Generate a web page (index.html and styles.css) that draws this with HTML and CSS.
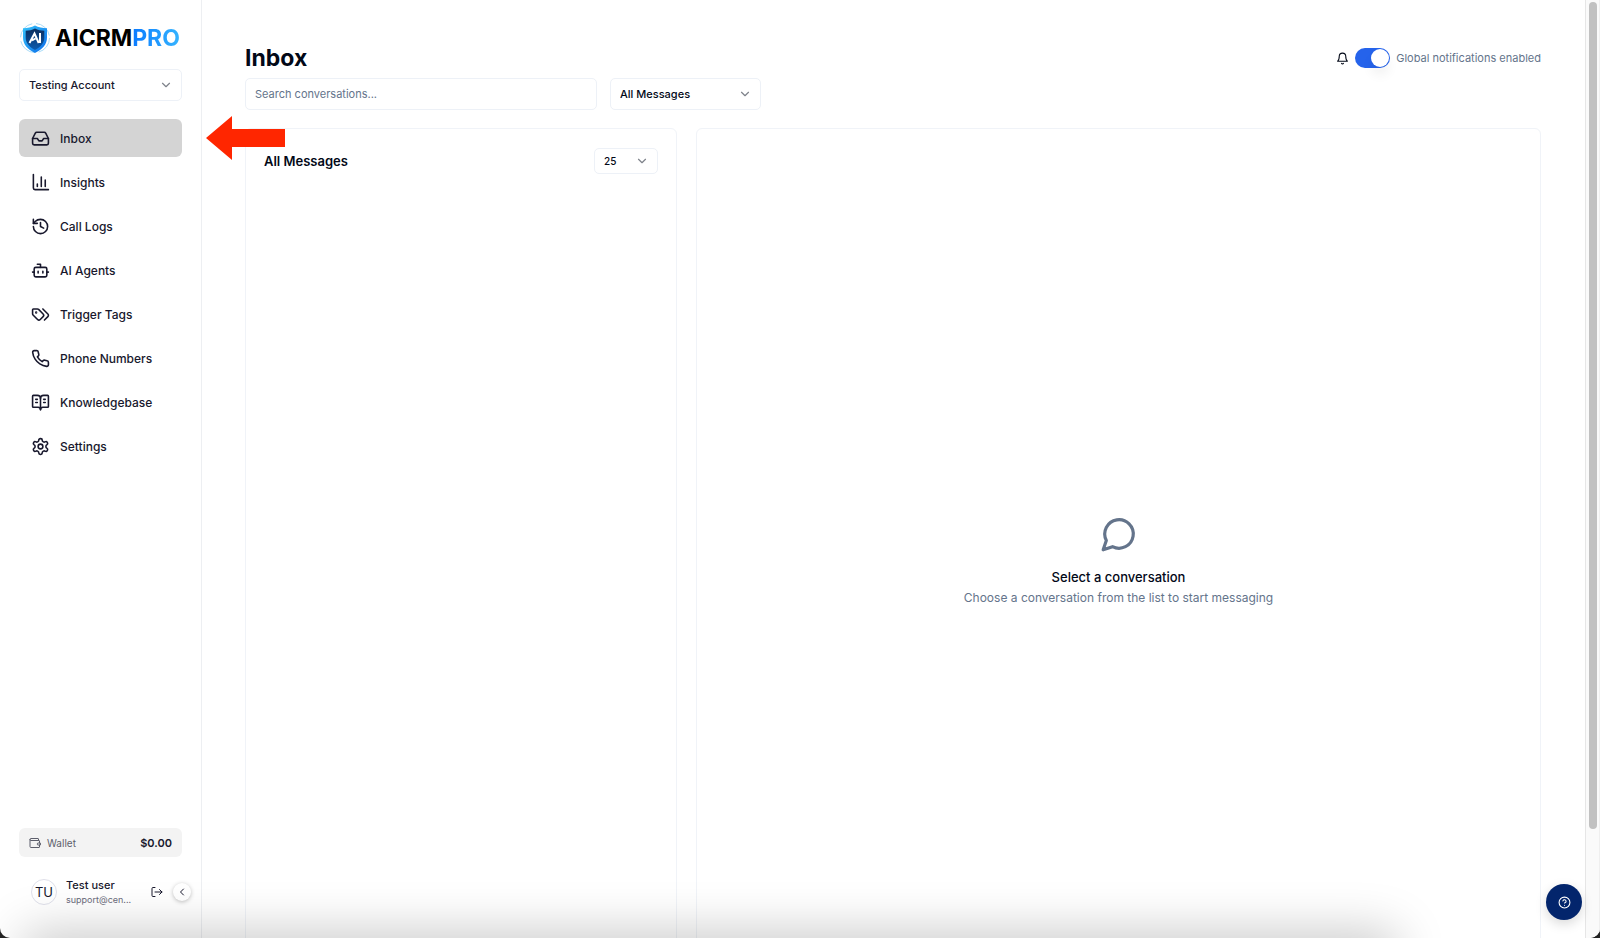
FILE: index.html
```html
<!DOCTYPE html>
<html lang="en">
<head>
  <meta charset="UTF-8">
  <meta name="viewport" content="width=device-width, initial-scale=1">
  <title>Inbox - AICRMPRO</title>
  <link rel="stylesheet" href="styles.css">
</head>
<body>

  <div class="app">

    <!-- Sidebar -->
    <aside class="sidebar">
      <a class="logo" href="#">
        <svg class="logo-mark" viewBox="0 0 32 32" aria-hidden="true">
          <defs>
            <linearGradient id="shieldEdge" x1="0" y1="0" x2="1" y2="1">
              <stop offset="0" stop-color="#35c3fb"/>
              <stop offset="1" stop-color="#0a6be8"/>
            </linearGradient>
            <linearGradient id="shieldFill" x1="0" y1="0" x2="0" y2="1">
              <stop offset="0" stop-color="#0b2c5c"/>
              <stop offset="1" stop-color="#0a5bb0"/>
            </linearGradient>
          </defs>
          <circle cx="16" cy="16" r="14.5" fill="none" stroke="#a9dcf8" stroke-width="1" stroke-dasharray="19 4"/>
          <path d="M16 3.500c3.500 2 7.500 2.700 12 2.700v9.300c0 7-4.500 11.800-12 15.500C8.500 27.300 4 22.500 4 15.500V6.200c4.500 0 8.500-.700 12-2.700z" fill="url(#shieldEdge)"/>
          <path d="M16 6.500c2.800 1.500 6 2.200 9.300 2.300v6.700c0 5.500-3.300 9.300-9.300 12.400-6-3.100-9.300-6.900-9.300-12.400V8.800c3.300-.1 6.500-.8 9.300-2.300z" fill="url(#shieldFill)"/>
          <path d="M10.500 21l5-9.500 4.200 9.500M13 18.500l3.500-2M21 11v10" fill="none" stroke="#fff" stroke-width="2"/>
        </svg>
        <span class="logo-text">AICRM<span class="logo-pro">PRO</span></span>
      </a>

      <div class="select account-select">
        <select aria-label="Account">
          <option>Testing Account</option>
        </select>
        <svg class="icon" viewBox="0 0 24 24" aria-hidden="true"><path d="m6 9 6 6 6-6"/></svg>
      </div>

      <nav class="nav">
        <a class="nav-item active" href="#" aria-current="page">
          <svg class="icon" viewBox="0 0 24 24" aria-hidden="true"><path d="M22 12h-6l-2 3h-4l-2-3H2"/><path d="M5.450 5.110 2 12v6a2 2 0 0 0 2 2h16a2 2 0 0 0 2-2v-6l-3.450-6.890A2 2 0 0 0 16.760 4H7.240a2 2 0 0 0-1.790 1.110z"/></svg>
          Inbox
        </a>
        <a class="nav-item" href="#">
          <svg class="icon" viewBox="0 0 24 24" aria-hidden="true"><path d="M3 2v17a2 2 0 0 0 2 2h17"/><path d="M8 17v-3M13 17V5M18 17V9"/></svg>
          Insights
        </a>
        <a class="nav-item" href="#">
          <svg class="icon" viewBox="0 0 24 24" aria-hidden="true"><path d="M3 12a9 9 0 1 0 9-9 9.750 9.750 0 0 0-6.740 2.740L3 8"/><path d="M3 3v5h5"/><path d="M12 7v5l4 2"/></svg>
          Call Logs
        </a>
        <a class="nav-item" href="#">
          <svg class="icon" viewBox="0 0 24 24" aria-hidden="true"><path d="M12 8V4H8"/><rect width="16" height="12" x="4" y="8" rx="2"/><path d="M2 14h2M20 14h2M15 13v2M9 13v2"/></svg>
          AI Agents
        </a>
        <a class="nav-item" href="#">
          <svg class="icon" viewBox="0 0 24 24" aria-hidden="true"><path d="m15 5 6.300 6.300a2.400 2.400 0 0 1 0 3.400L17 19"/><path d="M9.586 5.586A2 2 0 0 0 8.172 5H3a1 1 0 0 0-1 1v5.172a2 2 0 0 0 .586 1.414L8.290 18.290a2.426 2.426 0 0 0 3.420 0l3.580-3.580a2.426 2.426 0 0 0 0-3.420z"/><circle cx="6.500" cy="9.500" r=".5" fill="currentColor"/></svg>
          Trigger Tags
        </a>
        <a class="nav-item" href="#">
          <svg class="icon" viewBox="0 0 24 24" aria-hidden="true"><path d="M22 16.920v3a2 2 0 0 1-2.180 2 19.790 19.790 0 0 1-8.630-3.070 19.500 19.500 0 0 1-6-6 19.790 19.790 0 0 1-3.070-8.670A2 2 0 0 1 4.110 2h3a2 2 0 0 1 2 1.720 12.840 12.840 0 0 0 .7 2.810 2 2 0 0 1-.45 2.110L8.090 9.910a16 16 0 0 0 6 6l1.270-1.270a2 2 0 0 1 2.110-.45 12.840 12.840 0 0 0 2.810.7A2 2 0 0 1 22 16.920z"/></svg>
          Phone Numbers
        </a>
        <a class="nav-item" href="#">
          <svg class="icon" viewBox="0 0 24 24" aria-hidden="true"><path d="M12 7v14"/><path d="M16 12h2M16 8h2M6 12h2M6 8h2"/><path d="M3 18a1 1 0 0 1-1-1V4a1 1 0 0 1 1-1h5a4 4 0 0 1 4 4 4 4 0 0 1 4-4h5a1 1 0 0 1 1 1v13a1 1 0 0 1-1 1h-6a3 3 0 0 0-3 3 3 3 0 0 0-3-3z"/></svg>
          Knowledgebase
        </a>
        <a class="nav-item" href="#">
          <svg class="icon" viewBox="0 0 24 24" aria-hidden="true"><path d="M12.220 2h-.44a2 2 0 0 0-2 2v.18a2 2 0 0 1-1 1.730l-.43.25a2 2 0 0 1-2 0l-.15-.08a2 2 0 0 0-2.730.73l-.22.38a2 2 0 0 0 .73 2.730l.15.1a2 2 0 0 1 1 1.720v.51a2 2 0 0 1-1 1.740l-.15.09a2 2 0 0 0-.73 2.730l.22.38a2 2 0 0 0 2.730.73l.15-.08a2 2 0 0 1 2 0l.43.25a2 2 0 0 1 1 1.730V20a2 2 0 0 0 2 2h.44a2 2 0 0 0 2-2v-.18a2 2 0 0 1 1-1.730l.43-.25a2 2 0 0 1 2 0l.15.08a2 2 0 0 0 2.730-.73l.22-.39a2 2 0 0 0-.73-2.730l-.15-.08a2 2 0 0 1-1-1.740v-.5a2 2 0 0 1 1-1.740l.15-.09a2 2 0 0 0 .73-2.730l-.22-.38a2 2 0 0 0-2.730-.73l-.15.08a2 2 0 0 1-2 0l-.43-.25a2 2 0 0 1-1-1.730V4a2 2 0 0 0-2-2z"/><circle cx="12" cy="12" r="3"/></svg>
          Settings
        </a>
      </nav>

      <div class="wallet">
        <svg class="icon" viewBox="0 0 24 24" aria-hidden="true"><path d="M19 7V4a1 1 0 0 0-1-1H4a2 2 0 0 0 0 4h16a1 1 0 0 1 1 1v4"/><path d="M2 5v14a2 2 0 0 0 2 2h16a1 1 0 0 0 1-1v-4"/><path d="M22 12h-3.500a2 2 0 0 0 0 4H22z"/></svg>
        <span>Wallet</span>
        <strong>$0.00</strong>
      </div>

      <div class="user">
        <span class="avatar">TU</span>
        <div class="user-info">
          <div class="user-name">Test user</div>
          <div class="user-email">support@cen...</div>
        </div>
        <button class="logout" type="button" aria-label="Log out">
          <svg class="icon" viewBox="0 0 24 24" aria-hidden="true"><path d="M8 3H4a2 2 0 0 0-2 2v14a2 2 0 0 0 2 2h4"/><path d="M8 12h14M17 7l5 5-5 5"/></svg>
        </button>
        <button class="collapse" type="button" aria-label="Collapse sidebar">
          <svg class="icon" viewBox="0 0 24 24" aria-hidden="true"><path d="m15 18-6-6 6-6"/></svg>
        </button>
      </div>
    </aside>

    <!-- Inbox -->
    <main class="main">
      <header class="page-header">
        <h1>Inbox</h1>
        <div class="notifications">
          <svg class="icon" viewBox="0 0 24 24" aria-hidden="true"><path d="M6 8a6 6 0 0 1 12 0c0 7 3 9 3 9H3s3-2 3-9"/><path d="M10.300 21a1.940 1.940 0 0 0 3.400 0"/></svg>
          <input class="switch" type="checkbox" id="notifications" checked>
          <label for="notifications">Global notifications enabled</label>
        </div>
      </header>

      <div class="filters">
        <input class="search" type="text" placeholder="Search conversations..." aria-label="Search conversations">
        <div class="select filter-select">
          <select aria-label="Filter messages">
            <option>All Messages</option>
          </select>
          <svg class="icon" viewBox="0 0 24 24" aria-hidden="true"><path d="m6 9 6 6 6-6"/></svg>
        </div>
      </div>

      <div class="panels">
        <section class="panel list-panel">
          <h2>All Messages</h2>
          <div class="select size-select">
            <select aria-label="Messages per page">
              <option>25</option>
            </select>
            <svg class="icon" viewBox="0 0 24 24" aria-hidden="true"><path d="m6 9 6 6 6-6"/></svg>
          </div>
        </section>

        <section class="panel chat-panel">
          <svg class="icon" viewBox="0 0 24 24" aria-hidden="true"><path d="M7.900 20A9 9 0 1 0 4 16.100L2 22Z"/></svg>
          <h3>Select a conversation</h3>
          <p>Choose a conversation from the list to start messaging</p>
        </section>
      </div>
    </main>

    <!-- Scroll track -->
    <div class="scroll-track">
      <div class="scroll-thumb"></div>
    </div>

    <!-- Over the page -->
    <svg class="arrow" viewBox="0 0 79 44" aria-hidden="true"><path d="M0 22 26 0v13h53v18H26v13z" fill="#ff2600"/></svg>
    <button class="help" type="button" aria-label="Help">
      <svg class="icon" viewBox="0 0 24 24" aria-hidden="true"><circle cx="12" cy="12" r="10"/><path d="M9.090 9a3 3 0 0 1 5.830 1c0 2-3 3-3 3"/><path d="M12 17h.01"/></svg>
    </button>
    <div class="bottom-shade"></div>
  </div>

</body>
</html>
```

FILE: styles.css
```css
* {
  box-sizing: border-box;
}

body {
  margin: 0;
  background-color: #222;
  color: #020817;
  font-family: Inter, "Liberation Sans", sans-serif;
  font-size: 11px;
}

h1, h2, h3, p {
  margin: 0;
}

a {
  color: inherit;
  text-decoration: none;
}

button, input, select {
  margin: 0;
  font-family: inherit;
  color: inherit;
}

button {
  display: flex;
  align-items: center;
  justify-content: center;
  padding: 0;
  border: none;
  background: none;
  cursor: pointer;
}

.icon {
  flex-shrink: 0;
  fill: none;
  stroke: currentColor;
  stroke-width: 2;
  stroke-linecap: round;
  stroke-linejoin: round;
}

.app {
  position: relative;
  display: flex;
  height: 100vh;
  overflow: hidden;
  background-color: #fff;
  border-radius: 0 0 10px 10px;
}

/* Selects */
.select {
  display: grid;
  align-items: center;
}

.select select,
.select .icon {
  grid-area: 1 / 1;
}

.select select {
  appearance: none;
  width: 100%;
  height: 32px;
  padding: 0 9px;
  border: 1px solid #edf1f7;
  border-radius: 5px;
  background-color: #fff;
  font-size: 11px;
  font-weight: 500;
}

.select .icon {
  justify-self: end;
  width: 14px;
  height: 14px;
  margin-right: 9px;
  color: #7f838b;
  pointer-events: none;
}

/* Sidebar */
.sidebar {
  display: flex;
  flex-direction: column;
  flex-shrink: 0;
  width: 202px;
  padding: 22px 19px 32px 19px;
  border-right: 1px solid #edeff2;
  color: #18182d;
}

.logo {
  display: flex;
  align-items: center;
  gap: 4px;
  height: 32px;
  margin-bottom: 15px;
  color: #000;
}

.logo-mark {
  width: 32px;
  height: 32px;
}

.logo-text {
  font-size: 23px;
  font-weight: 700;
}

.logo-pro {
  background: linear-gradient(90deg, #0a7bff, #35b4ff);
  background-clip: text;
  -webkit-background-clip: text;
  color: transparent;
}

.nav {
  display: flex;
  flex-direction: column;
  gap: 6px;
  margin-top: 18px;
  margin-bottom: auto;
}

.nav-item {
  display: flex;
  align-items: center;
  gap: 10px;
  height: 38px;
  padding: 0 12px;
  border-radius: 6px;
  font-size: 12px;
  font-weight: 500;
}

.nav-item.active {
  background-color: #d4d4d4;
}

.nav-item .icon {
  width: 19px;
  height: 19px;
}

.wallet {
  display: flex;
  align-items: center;
  gap: 6px;
  height: 29px;
  padding: 0 10px;
  border-radius: 6px;
  background-color: #f3f3f3;
  color: #5d5f6c;
  font-size: 10px;
}

.wallet .icon {
  width: 12px;
  height: 12px;
}

.wallet strong {
  margin-left: auto;
  color: #18182d;
  font-size: 11px;
  font-weight: 600;
}

.user {
  display: flex;
  align-items: center;
  margin-top: 21px;
  margin-right: -10px;
  padding-left: 12px;
}

.avatar {
  display: flex;
  align-items: center;
  justify-content: center;
  width: 26px;
  height: 26px;
  border: 1px solid #dfe0ea;
  border-radius: 50%;
  font-size: 13px;
}

.user-info {
  width: 76px;
  margin: 0 9px;
}

.user-name {
  font-size: 11px;
  font-weight: 500;
  line-height: 15px;
}

.user-email {
  color: #6b6c7b;
  font-size: 9px;
  line-height: 13px;
}

.logout .icon {
  width: 12px;
  height: 12px;
}

.collapse {
  width: 18px;
  height: 18px;
  margin-left: 10px;
  border-radius: 50%;
  background-color: #fff;
  box-shadow: 0 1px 4px rgba(0, 0, 0, 0.25);
}

.collapse .icon {
  width: 12px;
  height: 12px;
}

/* Main column */
.main {
  flex: 1;
  min-width: 0;
  padding: 43px 44px 0 43px;
}

.page-header {
  display: flex;
  align-items: center;
  justify-content: space-between;
  height: 30px;
  margin-bottom: 5px;
}

h1 {
  font-size: 23px;
  font-weight: 700;
}

.notifications {
  display: flex;
  align-items: center;
  gap: 6px;
  color: #64748b;
}

.notifications .icon {
  width: 13px;
  height: 13px;
  color: #020817;
}

.switch {
  appearance: none;
  display: flex;
  align-items: center;
  justify-content: flex-end;
  width: 35px;
  height: 20px;
  padding: 1px;
  border-radius: 10px;
  background-color: #2563eb;
  cursor: pointer;
}

.switch::before {
  content: "";
  width: 18px;
  height: 18px;
  border-radius: 50%;
  background-color: #fff;
  box-shadow: 0 8px 12px rgba(0, 0, 0, 0.06);
}

.switch:not(:checked) {
  justify-content: flex-start;
  background-color: #cbd5e1;
}

.filters {
  display: flex;
  gap: 13px;
  margin-bottom: 18px;
}

.search {
  width: 352px;
  height: 32px;
  padding: 0 9px;
  border: 1px solid #edf1f7;
  border-radius: 5px;
  font-size: 11px;
}

.search::placeholder {
  color: #64748b;
}

.filter-select {
  width: 151px;
}

.panels {
  display: grid;
  grid-template-columns: calc(100% / 3) 1fr;
  gap: 19px;
}

.panel {
  min-height: calc(100vh - 72px);
  border: 1px solid #f0f3f8;
  border-radius: 6px;
}

.list-panel {
  display: flex;
  align-items: flex-start;
  justify-content: space-between;
  padding: 19px 18px;
}

h2 {
  font-size: 13px;
  font-weight: 600;
  line-height: 26px;
}

.size-select {
  width: 64px;
}

.size-select select {
  height: 26px;
  font-size: 10px;
}

.chat-panel {
  display: flex;
  flex-direction: column;
  align-items: center;
  justify-content: center;
}

.chat-panel .icon {
  width: 38px;
  height: 38px;
  margin-bottom: 13px;
  color: #64748b;
}

h3 {
  font-size: 13px;
  font-weight: 500;
  line-height: 22px;
}

.chat-panel p {
  color: #64748b;
  font-size: 12px;
  line-height: 20px;
}

/* Scroll track */
.scroll-track {
  flex-shrink: 0;
  width: 15px;
  padding: 2px 3px;
  border-left: 1px solid #e6e6e6;
  border-right: 1px solid #efefef;
  background-color: #fafafa;
}

.scroll-thumb {
  width: 8px;
  height: calc(100vh - 111px);
  border-radius: 4px;
  background-color: #c1c1c1;
}

/* Over the page */
.arrow {
  position: absolute;
  top: 116px;
  left: 206px;
  width: 79px;
  height: 44px;
}

.help {
  position: absolute;
  right: 18px;
  bottom: 18px;
  width: 36px;
  height: 36px;
  border-radius: 50%;
  background-color: #03256c;
  box-shadow: 0 4px 12px rgba(0, 0, 0, 0.15);
  color: #fff;
}

.help .icon {
  width: 13px;
  height: 13px;
}

.bottom-shade {
  position: absolute;
  left: 30px;
  right: 210px;
  bottom: -40px;
  height: 40px;
  box-shadow: 0 0 50px 6px rgba(0, 0, 0, 0.22);
  pointer-events: none;
}
```
